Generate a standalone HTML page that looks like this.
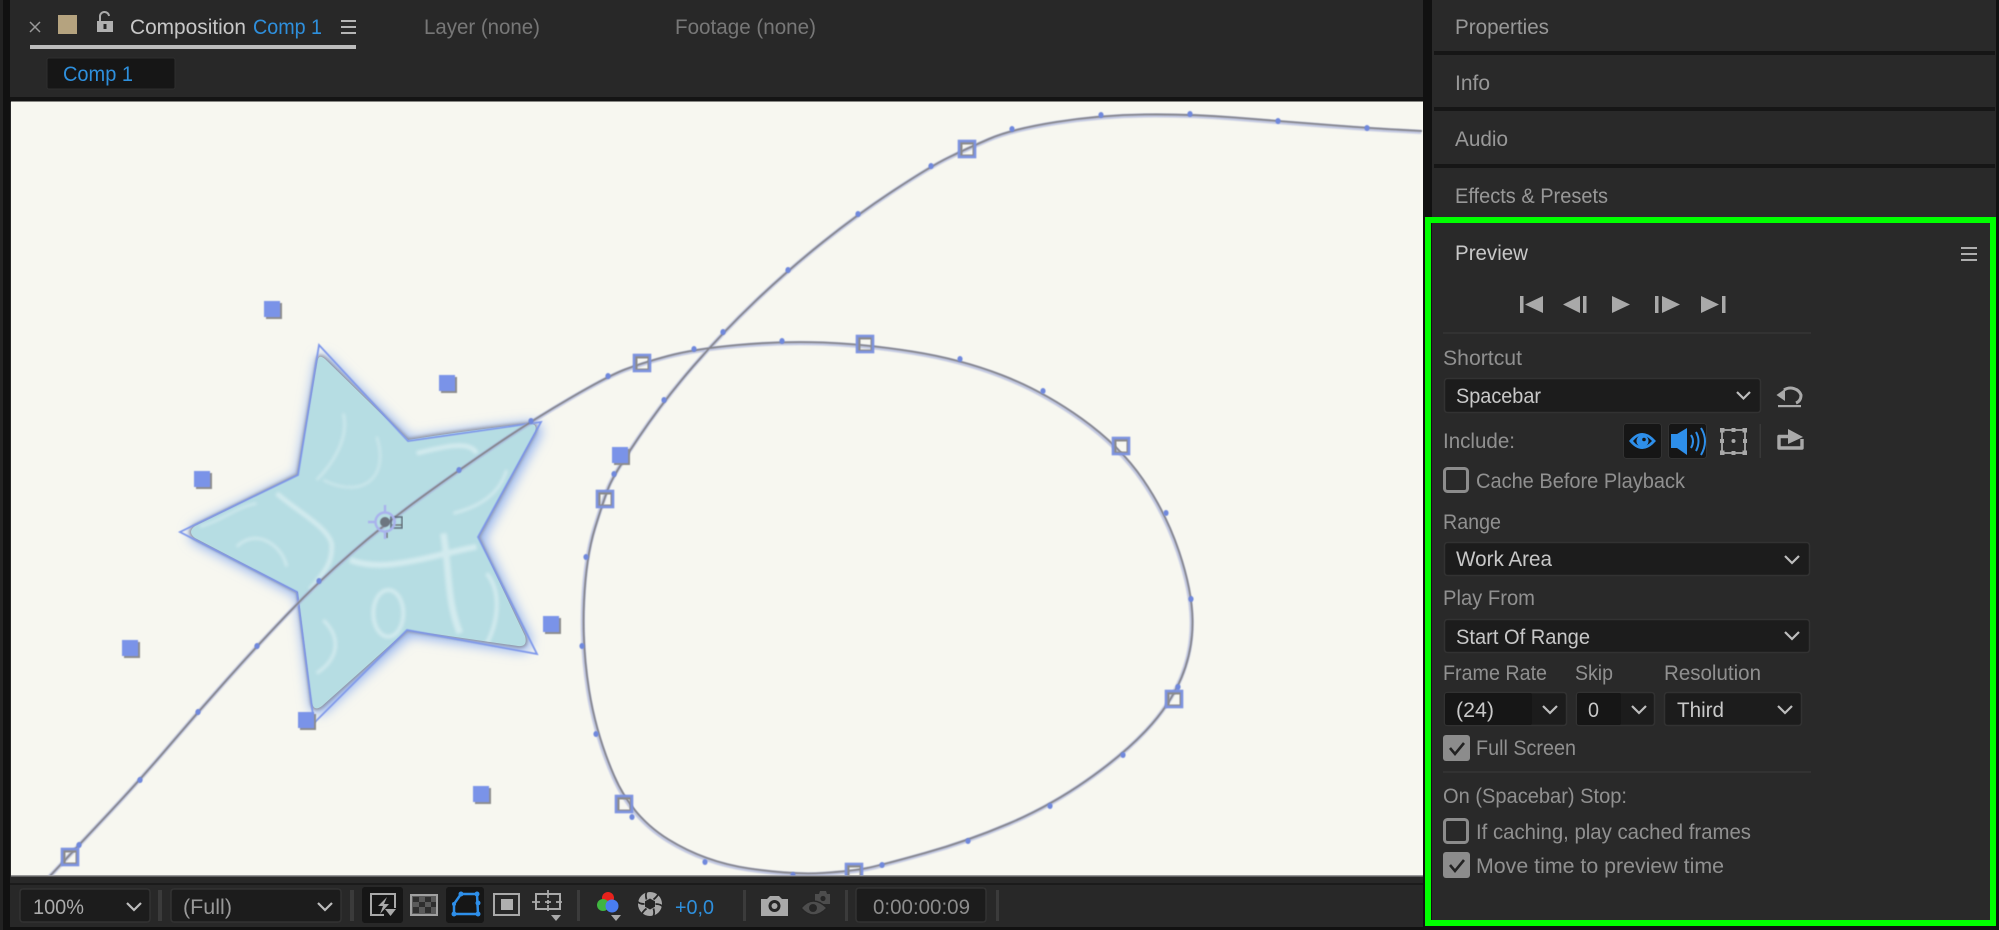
<!DOCTYPE html>
<html lang="en"><head><meta charset="utf-8"><title>Composition Comp 1</title>
<style>
html,body{margin:0;padding:0;background:#111;width:1999px;height:930px;overflow:hidden}
svg{display:block}
text{font-family:"Liberation Sans",sans-serif;font-size:21px;fill:#909090}
.w{fill:#c8c8c8}.b{fill:#2f8fdc}.g{fill:#777}.m{fill:#989898}
.dd{fill:#1b1b1b;stroke:#333;stroke-width:1.5}
.ch{fill:none;stroke:#bdbdbd;stroke-width:2.2}
.sep{fill:#3a3a3a}
.ic{fill:#a9a9a9}
.is{fill:none;stroke:#a9a9a9}
</style></head><body>
<svg width="1999" height="930" viewBox="0 0 1999 930" xmlns="http://www.w3.org/2000/svg">
<defs>
<filter id="b5" x="-30%" y="-30%" width="160%" height="160%"><feGaussianBlur stdDeviation="6"/></filter>
<filter id="b2" x="-30%" y="-30%" width="160%" height="160%"><feGaussianBlur stdDeviation="1.5"/></filter>
<filter id="b4" x="-30%" y="-30%" width="160%" height="160%"><feGaussianBlur stdDeviation="5"/></filter>
<filter id="b1" x="-10%" y="-10%" width="120%" height="120%"><feGaussianBlur stdDeviation=".8"/></filter>
<filter id="s5" x="-2%" y="-2%" width="104%" height="104%"><feGaussianBlur stdDeviation=".5"/></filter>
<filter id="t" x="-5%" y="-30%" width="110%" height="160%"><feGaussianBlur stdDeviation=".35"/></filter>
<path id="star" d="M317.700 360 Q319 354 325 359 L408 440 Q470 430 528 424 Q538 423 535 432 L478 537 L525 636 Q528 647 518 646 L407 630 L322 706 Q314 712 312 703 L298 592 L195 538 Q187 532 195 526 L298 475Z"/>
<clipPath id="sc"><use href="#star"/></clipPath>
<path id="mp" d="M50 876L64.500 860.500Q79 845 109.500 812.500Q140 780 169 746Q198 712 227.500 679Q257 646 288 613.500Q319 581 352.500 552Q386 523 422.500 496.500Q459 470 495 445.500Q531 421 569.500 398.500Q608 376 625 369.500Q642 363 668 356Q694 349 738 345Q782 341 823 342.500Q864 344 912 351.500Q960 359 1001.500 375Q1043 391 1081.500 418.500Q1120 446 1143 479.500Q1166 513 1179 551.500Q1192 590 1192.500 620Q1193 650 1181.500 677.500Q1170 705 1146.500 730Q1123 755 1086.500 780.500Q1050 806 1009 823.500Q968 841 925 853Q882 865 867.500 868Q853 871 823 873Q793 875 749 868.500Q705 862 668.500 839.500Q632 817 614 775.500Q596 734 589 690Q582 646 584 601.500Q586 557 595 528Q604 499 609 486.500Q614 474 639 437Q664 400 693.500 366Q723 332 755.500 301Q788 270 823 242Q858 214 894.500 190Q931 166 948.500 157.500Q966 149 989 139Q1012 129 1056.500 122Q1101 115 1145.500 114.500Q1190 114 1234 117.500Q1278 121 1322.500 124.500Q1367 128 1394.500 129.500L1422 131"/>
<g id="sq"><rect x="2" y="2" width="16" height="16" fill="#8c8c8c"/><rect width="16" height="16" fill="#7a93e8"/></g>
<g id="kf"><rect x="-6" y="-6" width="13" height="13" fill="none" stroke="#8b8b8b" stroke-width="3"/><rect x="-8" y="-8" width="16" height="16" fill="none" stroke="#7d93df" stroke-width="2.600"/></g>
<ellipse id="dot" rx="2.600" ry="3" fill="#6f88dc"/>
</defs>

<rect width="1999" height="930" fill="#111"/>
<rect x="0" y="0" width="3" height="930" fill="#222"/>
<!-- comp panel -->
<rect x="10" y="0" width="1413" height="927" fill="#282828"/>
<rect x="10" y="97" width="1413" height="5" fill="#141414"/>
<rect x="11" y="101.500" width="1412" height="774.500" fill="#f7f7f0"/>
<rect x="11" y="875" width="1412" height="1.500" fill="#999"/>
<rect x="10" y="883" width="1413" height="2" fill="#1b1b1b"/>

<!-- tabs -->
<g filter="url(#t)">
<path d="M30 22l10 10M40 22l-10 10" stroke="#9a9a9a" stroke-width="1.500"/>
<rect x="58" y="15" width="19" height="19" fill="#b5a37f"/>
<path d="M100 21V17a4.500 4.500 0 0 1 9-1" fill="none" stroke="#aaa" stroke-width="2"/><rect x="97" y="21" width="16" height="11" fill="#b0b0b0"/><rect x="103.500" y="24" width="3" height="5" fill="#282828"/>
<text class="w" x="130" y="34" textLength="116" lengthAdjust="spacingAndGlyphs">Composition</text>
<text class="b" x="253" y="34" textLength="69" lengthAdjust="spacingAndGlyphs">Comp 1</text>
<path d="M341 21h15M341 27h15M341 33h15" stroke="#b5b5b5" stroke-width="2"/>
<rect x="30" y="45" width="326" height="4" fill="#bdbdbd"/>
<text class="g" x="424" y="34" textLength="116" lengthAdjust="spacingAndGlyphs">Layer (none)</text>
<text class="g" x="675" y="34" textLength="141" lengthAdjust="spacingAndGlyphs">Footage (none)</text>
<rect x="47" y="58" width="128" height="31" rx="2" fill="#131313" stroke="#2f2f2f"/>
<text class="b" x="63" y="81" textLength="70" lengthAdjust="spacingAndGlyphs">Comp 1</text>
</g>

<!-- motion path -->
<clipPath id="cv"><rect x="11" y="101.500" width="1412" height="774"/></clipPath>
<g clip-path="url(#cv)">
<!-- star -->
<use href="#star" transform="translate(2 2)" fill="#8fb0f0" stroke="#8fb0f0" stroke-width="7" filter="url(#b5)"/>
<use href="#star" fill="#8e8e96" stroke="#8e8e96" stroke-width="3.500" filter="url(#b2)" opacity=".85"/>
<use href="#star" fill="#b6dde3"/>
<g clip-path="url(#sc)">
<g transform="translate(110 280) scale(.3333)" fill="none" stroke="#e6f4f6" filter="url(#b4)" opacity=".6">
<path d="M500 640C570 700 650 740 665 790C670 850 640 880 600 930" stroke-width="14"/>
<path d="M380 800C440 740 520 800 530 860" stroke-width="8"/>
<path d="M270 740C340 720 380 680 440 670" stroke-width="7"/>
<ellipse cx="835" cy="1000" rx="45" ry="70" stroke-width="12"/>
<path d="M720 840C820 880 950 830 1100 800" stroke-width="18"/>
<path d="M1000 760C1020 880 1010 960 1050 1060" stroke-width="20"/>
<path d="M640 1020C700 1080 680 1140 620 1180" stroke-width="10"/>
<path d="M920 520C1000 500 1080 480 1100 520" stroke-width="14"/>
<path d="M1030 700C1110 680 1170 640 1190 570" stroke-width="9"/>
<path d="M700 400C720 480 660 560 620 600" stroke-width="7"/>
<path d="M640 600C760 660 840 590 800 470" stroke-width="6"/>
<path d="M1130 880C1180 940 1160 1040 1130 1090" stroke-width="12"/>
</g>
</g>
<polygon points="319,345 408,441 541,422 478,537 537,654 407,630 314,723 297,592 180,532 298,475" fill="none" stroke="#7e97ea" stroke-width="1.800" filter="url(#s5)"/>

<use href="#mp" fill="none" stroke="#a3acd8" stroke-opacity=".65" stroke-width="4" transform="translate(-.8 1)" filter="url(#b1)"/>
<use href="#mp" fill="none" stroke="#85858c" stroke-width="1.800" filter="url(#s5)"/>

<g filter="url(#s5)">
<use href="#dot" x="79" y="845"/><use href="#dot" x="140" y="780"/><use href="#dot" x="198" y="712"/><use href="#dot" x="257" y="646"/><use href="#dot" x="319" y="581"/><use href="#dot" x="459" y="470"/><use href="#dot" x="531" y="421"/><use href="#dot" x="608" y="376"/><use href="#dot" x="694" y="349"/><use href="#dot" x="782" y="341"/><use href="#dot" x="960" y="359"/><use href="#dot" x="1043" y="391"/><use href="#dot" x="1166" y="513"/><use href="#dot" x="1191" y="599"/><use href="#dot" x="1178" y="687"/><use href="#dot" x="1123" y="755"/><use href="#dot" x="1050" y="806"/><use href="#dot" x="968" y="841"/><use href="#dot" x="882" y="865"/><use href="#dot" x="793" y="875"/><use href="#dot" x="705" y="862"/><use href="#dot" x="632" y="817"/><use href="#dot" x="596" y="734"/><use href="#dot" x="582" y="646"/><use href="#dot" x="586" y="557"/><use href="#dot" x="614" y="474"/><use href="#dot" x="664" y="400"/><use href="#dot" x="723" y="332"/><use href="#dot" x="788" y="270"/><use href="#dot" x="858" y="214"/><use href="#dot" x="931" y="166"/><use href="#dot" x="1012" y="129"/><use href="#dot" x="1101" y="115"/><use href="#dot" x="1190" y="114"/><use href="#dot" x="1278" y="121"/><use href="#dot" x="1367" y="128"/>

<use href="#kf" x="70" y="857"/><use href="#kf" x="642" y="363"/><use href="#kf" x="865" y="344"/><use href="#kf" x="1121" y="446"/><use href="#kf" x="1174" y="699"/><use href="#kf" x="854" y="872"/><use href="#kf" x="624" y="804"/><use href="#kf" x="605" y="499"/><use href="#kf" x="967" y="149"/>

<use href="#sq" x="264" y="301"/><use href="#sq" x="439" y="375"/><use href="#sq" x="194" y="471"/><use href="#sq" x="122" y="640"/><use href="#sq" x="298" y="712"/><use href="#sq" x="543" y="616"/><use href="#sq" x="473" y="786"/><use href="#sq" x="612" y="447"/>
</g>

<!-- anchor -->
<g fill="none" filter="url(#s5)">
<rect x="391" y="517" width="11" height="11" stroke="#5d6a78" stroke-width="1.500"/>
<path d="M392 525h10M387 530v8" stroke="#666" stroke-width="1.300"/>
<circle cx="385" cy="522" r="9.500" stroke="#a9b2ec" stroke-width="2.400"/>
<circle cx="385" cy="522" r="5" fill="#6d7680"/>
<path d="M385 505v8M385 531v8M368 522h8M394 522h2" stroke="#a9b2ec" stroke-width="2.400"/>
</g>
</g>

<!-- bottom toolbar -->
<g filter="url(#t)">
<rect x="20" y="889" width="130" height="33" rx="3" class="dd"/>
<text class="m" x="33" y="914" textLength="51" lengthAdjust="spacingAndGlyphs" style="fill:#ababab">100%</text>
<path class="ch" d="M127 903l7 7 7-7"/>
<rect x="158" y="890" width="4" height="31" class="sep"/>
<rect x="171" y="889" width="170" height="33" rx="3" class="dd"/>
<text class="m" x="183" y="914" textLength="49" lengthAdjust="spacingAndGlyphs">(Full)</text>
<path class="ch" d="M318 903l7 7 7-7"/>
<rect x="350" y="890" width="4" height="31" class="sep"/>

<rect x="362" y="887" width="41" height="36" rx="3" fill="#141414"/>
<path class="is" stroke-width="2" d="M384 915H371V894H395V908"/>
<path class="ic" d="M387 897L378 906H383L380 914L389 904H384Z"/>
<path class="ic" d="M385 909H396L390.500 916Z"/>

<rect x="411" y="895" width="26" height="20" fill="#5a5a5a" stroke="#a0a0a0" stroke-width="2"/>
<path fill="#2f2f2f" d="M413 897h6v5h-6zM425 897h6v5h-6zM419 902h6v5h-6zM431 902h5v5h-5zM413 907h6v6h-6zM425 907h6v6h-6z"/>

<rect x="446" y="887" width="38" height="36" rx="3" fill="#141414"/>
<path fill="none" stroke="#2f8fea" stroke-width="2.500" d="M461 894H477L478 914H454V904Z"/>
<g fill="#2f8fea"><circle cx="461" cy="894" r="2.500"/><circle cx="477" cy="894" r="2.500"/><circle cx="478" cy="903" r="2.500"/><circle cx="478" cy="914" r="2.500"/><circle cx="454" cy="914" r="2.500"/><circle cx="454" cy="904" r="2"/></g>

<rect x="494" y="894" width="25" height="21" fill="none" stroke="#a9a9a9" stroke-width="2"/>
<rect x="501" y="899" width="12" height="11" fill="#b0b0b0"/>

<rect x="536" y="894" width="24" height="15" fill="none" stroke="#a9a9a9" stroke-width="2"/>
<path d="M548 890v8M548 905v6M532 902h8M556 902h6M545 902h6M548 900v4" stroke="#a9a9a9" stroke-width="1.800"/>
<path class="ic" d="M551 915H561L556 921Z"/>
<rect x="577" y="890" width="3" height="31" class="sep"/>

<circle cx="608" cy="898" r="6" fill="#e8241c"/>
<circle cx="603" cy="905" r="6" fill="#3fb53f"/>
<circle cx="612" cy="906" r="6.500" fill="#4a7df0"/>
<path class="ic" d="M611 915H621L616 921Z"/>

<!-- aperture -->
<circle cx="650" cy="904" r="12" fill="#a9a9a9"/>
<g fill="none" stroke="#282828" stroke-width="1.800">
<path d="M653.500 899.500Q658 896 659 892"/>
<path d="M655.500 904Q661 904 663 907"/>
<path d="M653.500 908.500Q655 914 653 916.500"/>
<path d="M646.500 908.500Q642 912 641 916"/>
<path d="M644.500 904Q639 904 637 901"/>
<path d="M646.500 899.500Q645 894 647 891.500"/>
</g>
<path d="M650 898.500L655 901.300V906.700L650 909.500L645 906.700V901.300Z" fill="#282828"/>

<text class="b" x="675" y="914" textLength="39" lengthAdjust="spacingAndGlyphs" style="font-size:20px">+0,0</text>
<rect x="743" y="890" width="3" height="31" class="sep"/>

<path class="ic" d="M761 899H767L770 896H779L782 899H788V916H761Z"/>
<circle cx="774.500" cy="906" r="6" fill="#282828"/><circle cx="774.500" cy="906" r="3" fill="#a9a9a9"/>
<!-- ghost -->
<path fill="#4e4e4e" d="M815 894H819L820 891H826L827 894H830V904H815Z"/>
<circle cx="823" cy="898.500" r="2.600" fill="#282828"/>
<path fill="#4e4e4e" stroke="#282828" stroke-width="1.500" d="M801 908Q813 894 827 908Q813 922 801 908Z"/>
<circle cx="813" cy="908" r="4" fill="#282828"/>
<rect x="845" y="890" width="3" height="31" class="sep"/>
<rect x="856" y="888" width="130" height="34" rx="3" class="dd"/>
<text class="m" x="873" y="914" textLength="97" lengthAdjust="spacingAndGlyphs" style="fill:#8d8d8d">0:00:00:09</text>
<rect x="996" y="890" width="3" height="31" class="sep"/>
</g>

<!-- right panels -->
<rect x="1432" y="0" width="564" height="930" fill="#292929"/>
<rect x="1434" y="51" width="561" height="4" fill="#161616"/>
<rect x="1434" y="107" width="561" height="4" fill="#161616"/>
<rect x="1434" y="164" width="561" height="4" fill="#161616"/>
<rect x="1432" y="920" width="567" height="10" fill="#111"/>
<rect x="1996" y="0" width="3" height="930" fill="#111"/>
<g filter="url(#t)">
<text class="m" x="1455" y="34" textLength="94" lengthAdjust="spacingAndGlyphs">Properties</text>
<text class="m" x="1455" y="90" textLength="35" lengthAdjust="spacingAndGlyphs">Info</text>
<text class="m" x="1455" y="146" textLength="53" lengthAdjust="spacingAndGlyphs">Audio</text>
<text class="m" x="1455" y="203" textLength="153" lengthAdjust="spacingAndGlyphs">Effects &amp; Presets</text>
<text class="w" x="1455" y="260" textLength="73" lengthAdjust="spacingAndGlyphs">Preview</text>
<path d="M1961 248h16M1961 254h16M1961 260h16" stroke="#aeaeae" stroke-width="2"/>

<!-- transport -->
<g class="ic">
<rect x="1520" y="296" width="3.500" height="17"/><path d="M1543 296V313L1525 304.500Z"/>
<path d="M1563 304.500L1580 296V313Z"/><rect x="1583" y="296" width="3.500" height="17"/>
<path d="M1612 296L1630 304.500L1612 313Z"/>
<rect x="1655" y="296" width="3.500" height="17"/><path d="M1662 296L1680 304.500L1662 313Z"/>
<path d="M1701 296L1719 304.500L1701 313Z"/><rect x="1722" y="296" width="3.500" height="17"/>
</g>
<rect x="1443" y="332" width="368" height="2" fill="#323232"/>

<text x="1443" y="365" textLength="79" lengthAdjust="spacingAndGlyphs">Shortcut</text>
<rect x="1444.500" y="378.500" width="316" height="34" rx="3" class="dd"/>
<text class="w" x="1456" y="403" textLength="85" lengthAdjust="spacingAndGlyphs">Spacebar</text>
<path class="ch" d="M1737 392l6.500 6.500 6.500-6.500"/>
<path fill="none" stroke="#a9a9a9" stroke-width="3" d="M1784 390A11 10 0 0 1 1801 395Q1801 401 1796 403"/>
<path class="ic" d="M1776.500 395L1785 389V401Z"/>
<rect x="1778" y="405" width="23" height="2.200" fill="#a9a9a9"/>

<text x="1443" y="448" textLength="72" lengthAdjust="spacingAndGlyphs">Include:</text>
<rect x="1623.500" y="423.500" width="38" height="35" rx="3" fill="#141414" stroke="#303030"/>
<path fill="#2f8fea" d="M1629 441Q1642 425 1656 441Q1642 457 1629 441Z"/>
<path fill="#141414" d="M1633 441Q1642 430 1652 441Q1642 452 1633 441Z"/>
<circle cx="1642.500" cy="441" r="6" fill="#2f8fea"/><circle cx="1644" cy="439.500" r="1.800" fill="#141414"/>
<rect x="1668.500" y="423.500" width="38" height="35" rx="3" fill="#141414" stroke="#303030"/>
<path fill="#2f8fea" d="M1671 434H1677L1687 428V455L1677 448H1671Z"/>
<path fill="none" stroke="#2f8fea" stroke-width="2" d="M1691 435Q1695 441 1691 448M1696 432Q1701 441 1696 451M1701 428Q1709 441 1701 455"/>
<rect x="1722" y="430" width="23" height="23" fill="none" stroke="#a9a9a9" stroke-width="1.800"/>
<g fill="#a9a9a9"><rect x="1720" y="428" width="4.500" height="4.500"/><rect x="1742.500" y="428" width="4.500" height="4.500"/><rect x="1720" y="450.500" width="4.500" height="4.500"/><rect x="1742.500" y="450.500" width="4.500" height="4.500"/><circle cx="1733.500" cy="441" r="2"/><rect x="1731.500" y="428" width="4" height="4"/><rect x="1731.500" y="451" width="4" height="4"/><rect x="1720" y="439" width="4" height="4"/><rect x="1743" y="439" width="4" height="4"/></g>
<rect x="1759.500" y="424" width="1.500" height="34" fill="#383838"/>
<path fill="none" stroke="#a9a9a9" stroke-width="3.400" stroke-linejoin="round" d="M1788 436.500H1779V448H1802V439"/>
<path class="ic" d="M1788 429L1803 437L1788 444Z"/>

<rect x="1444.500" y="468.500" width="23" height="23" rx="3" fill="none" stroke="#8c8c8c" stroke-width="3"/>
<text x="1476" y="488" textLength="209" lengthAdjust="spacingAndGlyphs">Cache Before Playback</text>

<text x="1443" y="529" textLength="58" lengthAdjust="spacingAndGlyphs">Range</text>
<rect x="1444.500" y="542.500" width="365" height="33" rx="3" class="dd"/>
<text class="w" x="1456" y="566" textLength="96" lengthAdjust="spacingAndGlyphs">Work Area</text>
<path class="ch" d="M1785 556l7 7 7-7"/>

<text x="1443" y="605" textLength="92" lengthAdjust="spacingAndGlyphs">Play From</text>
<rect x="1444.500" y="619.500" width="365" height="33" rx="3" class="dd"/>
<text class="w" x="1456" y="644" textLength="134" lengthAdjust="spacingAndGlyphs">Start Of Range</text>
<path class="ch" d="M1785 632l7 7 7-7"/>

<text x="1443" y="680" textLength="104" lengthAdjust="spacingAndGlyphs">Frame Rate</text>
<text x="1575" y="680" textLength="38" lengthAdjust="spacingAndGlyphs">Skip</text>
<text x="1664" y="680" textLength="97" lengthAdjust="spacingAndGlyphs">Resolution</text>

<rect x="1444.500" y="692.500" width="122" height="33" rx="3" class="dd"/>
<rect x="1445" y="693" width="87" height="32" rx="2" fill="#141414"/>
<text class="w" x="1456" y="717" textLength="38" lengthAdjust="spacingAndGlyphs">(24)</text>
<path class="ch" d="M1543 706l7 7 7-7"/>
<rect x="1576.500" y="692.500" width="78" height="33" rx="3" class="dd"/>
<rect x="1577" y="693" width="44" height="32" rx="2" fill="#141414"/>
<text class="w" x="1588" y="717" textLength="11" lengthAdjust="spacingAndGlyphs">0</text>
<path class="ch" d="M1632 706l7 7 7-7"/>
<rect x="1664.500" y="692.500" width="137" height="33" rx="3" class="dd"/>
<text class="w" x="1677" y="717" textLength="47" lengthAdjust="spacingAndGlyphs">Third</text>
<path class="ch" d="M1778 706l7 7 7-7"/>

<rect x="1443" y="735" width="27" height="26" rx="3" fill="#8c8c8c"/>
<path d="M1450 748l5 6 9-11" fill="none" stroke="#222" stroke-width="2.600"/>
<text x="1476" y="755" textLength="100" lengthAdjust="spacingAndGlyphs">Full Screen</text>
<rect x="1443" y="771" width="368" height="2" fill="#323232"/>
<text x="1443" y="803" textLength="184" lengthAdjust="spacingAndGlyphs">On (Spacebar) Stop:</text>
<rect x="1444.500" y="819.500" width="23" height="23" rx="3" fill="none" stroke="#8c8c8c" stroke-width="3"/>
<text x="1476" y="839" textLength="275" lengthAdjust="spacingAndGlyphs">If caching, play cached frames</text>
<rect x="1443" y="852" width="27" height="26" rx="3" fill="#8c8c8c"/>
<path d="M1450 865l5 6 9-11" fill="none" stroke="#222" stroke-width="2.600"/>
<text x="1476" y="873" textLength="248" lengthAdjust="spacingAndGlyphs">Move time to preview time</text>
</g>

<!-- green highlight -->
<rect x="1428" y="220" width="565" height="703" fill="none" stroke="#00ff00" stroke-width="6"/>
</svg>
</body></html>
